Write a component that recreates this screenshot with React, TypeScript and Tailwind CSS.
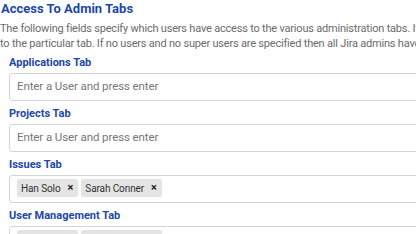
import React from 'react';

type Field = { label: string; users: string[] };

const fields: Field[] = [
  { label: 'Applications Tab', users: [] },
  { label: 'Projects Tab', users: [] },
  { label: 'Issues Tab', users: ['Han Solo', 'Sarah Conner'] },
  { label: 'User Management Tab', users: ['Han Solo', 'Sarah Conner'] },
];

function UserPicker({ users }: { users: string[] }) {
  return (
    <div className="flex items-center gap-[3px] h-[28px] w-[440px] border border-[#d4d4d4] rounded-[3px] bg-white pl-[7px]">
      {users.length === 0 ? (
        <span className="text-[11.5px] tracking-[-0.1px] text-[#777]">Enter a User and press enter</span>
      ) : (
        users.map((u) => (
          <span
            key={u}
            className="flex items-center h-[18px] -mt-[2px] bg-[#e4e4e4] rounded-[2px] pl-[4px] pr-[5px] text-[10px] tracking-[-0.1px] text-[#333]"
          >
            {u}
            <span className="ml-[7px] text-[11px] font-bold text-[#222]">×</span>
          </span>
        ))
      )}
    </div>
  );
}

export default function App() {
  return (
    <div className="w-[416px] h-[234px] overflow-hidden bg-white font-['Roboto',sans-serif]">
      <h2 className="pl-[1px] text-[13px] leading-[17px] font-bold text-[#1d47a7]">
        Access To Admin Tabs
      </h2>
      <p className="mt-[4px] whitespace-nowrap text-[11px] tracking-[-0.2px] leading-[15px] text-[#6b6b6b]">
        The following fields specify which users have access to the various administration tabs. If
        <br />
        to the particular tab. If no users and no super users are specified then all Jira admins have
      </p>
      <div className="mt-[4px] pl-[9px] flex flex-col gap-[5px]">
        {fields.map((f) => (
          <div key={f.label} className="flex flex-col gap-[2px]">
            <label className="text-[11px] leading-[16px] font-bold text-[#1d47a7]">{f.label}</label>
            <UserPicker users={f.users} />
          </div>
        ))}
      </div>
    </div>
  );
}
